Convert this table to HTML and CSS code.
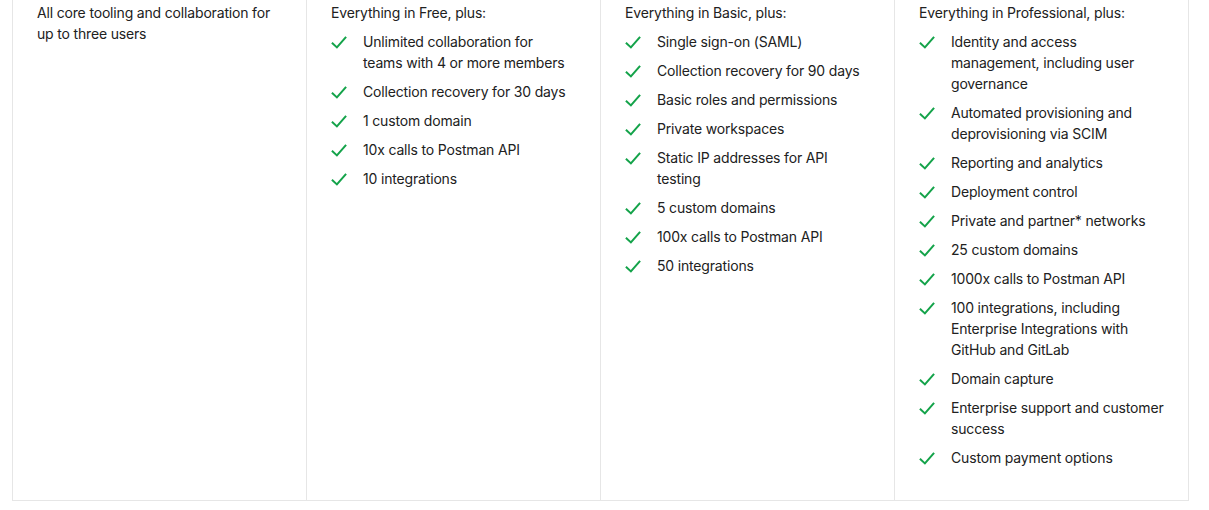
FILE: index.html
```
<!DOCTYPE html>
<html lang="en">
<head>
<meta charset="utf-8">
<title>Plans</title>
<link rel="stylesheet" href="styles.css">
</head>
<body>
<div class="plans">
  <div class="plan">
    <p class="lead">All core tooling and collaboration for up to three users</p>
  </div>
  <div class="plan">
    <p class="lead">Everything in Free, plus:</p>
    <ul class="features">
      <li><svg class="check" viewBox="0 0 16 16"><path d="M0.9 9.8 L5.9 14.4 L15.1 3.8"/></svg><span>Unlimited collaboration for teams&nbsp;with 4 or more members</span></li>
      <li><svg class="check" viewBox="0 0 16 16"><path d="M0.9 9.8 L5.9 14.4 L15.1 3.8"/></svg><span>Collection recovery for 30 days</span></li>
      <li><svg class="check" viewBox="0 0 16 16"><path d="M0.9 9.8 L5.9 14.4 L15.1 3.8"/></svg><span>1 custom domain</span></li>
      <li><svg class="check" viewBox="0 0 16 16"><path d="M0.9 9.8 L5.9 14.4 L15.1 3.8"/></svg><span>10x calls to Postman API</span></li>
      <li><svg class="check" viewBox="0 0 16 16"><path d="M0.9 9.8 L5.9 14.4 L15.1 3.8"/></svg><span>10 integrations</span></li>
    </ul>
  </div>
  <div class="plan">
    <p class="lead">Everything in Basic, plus:</p>
    <ul class="features">
      <li><svg class="check" viewBox="0 0 16 16"><path d="M0.9 9.8 L5.9 14.4 L15.1 3.8"/></svg><span>Single sign-on (SAML)</span></li>
      <li><svg class="check" viewBox="0 0 16 16"><path d="M0.9 9.8 L5.9 14.4 L15.1 3.8"/></svg><span>Collection recovery for 90 days</span></li>
      <li><svg class="check" viewBox="0 0 16 16"><path d="M0.9 9.8 L5.9 14.4 L15.1 3.8"/></svg><span>Basic roles and permissions</span></li>
      <li><svg class="check" viewBox="0 0 16 16"><path d="M0.9 9.8 L5.9 14.4 L15.1 3.8"/></svg><span>Private workspaces</span></li>
      <li><svg class="check" viewBox="0 0 16 16"><path d="M0.9 9.8 L5.9 14.4 L15.1 3.8"/></svg><span>Static IP addresses for API testing</span></li>
      <li><svg class="check" viewBox="0 0 16 16"><path d="M0.9 9.8 L5.9 14.4 L15.1 3.8"/></svg><span>5 custom domains</span></li>
      <li><svg class="check" viewBox="0 0 16 16"><path d="M0.9 9.8 L5.9 14.4 L15.1 3.8"/></svg><span>100x calls to Postman API</span></li>
      <li><svg class="check" viewBox="0 0 16 16"><path d="M0.9 9.8 L5.9 14.4 L15.1 3.8"/></svg><span>50 integrations</span></li>
    </ul>
  </div>
  <div class="plan">
    <p class="lead">Everything in Professional, plus:</p>
    <ul class="features">
      <li><svg class="check" viewBox="0 0 16 16"><path d="M0.9 9.8 L5.9 14.4 L15.1 3.8"/></svg><span>Identity and access management, including user governance</span></li>
      <li><svg class="check" viewBox="0 0 16 16"><path d="M0.9 9.8 L5.9 14.4 L15.1 3.8"/></svg><span>Automated provisioning and deprovisioning via SCIM</span></li>
      <li><svg class="check" viewBox="0 0 16 16"><path d="M0.9 9.8 L5.9 14.4 L15.1 3.8"/></svg><span>Reporting and analytics</span></li>
      <li><svg class="check" viewBox="0 0 16 16"><path d="M0.9 9.8 L5.9 14.4 L15.1 3.8"/></svg><span>Deployment control</span></li>
      <li><svg class="check" viewBox="0 0 16 16"><path d="M0.9 9.8 L5.9 14.4 L15.1 3.8"/></svg><span>Private and partner* networks</span></li>
      <li><svg class="check" viewBox="0 0 16 16"><path d="M0.9 9.8 L5.9 14.4 L15.1 3.8"/></svg><span>25 custom domains</span></li>
      <li><svg class="check" viewBox="0 0 16 16"><path d="M0.9 9.8 L5.9 14.4 L15.1 3.8"/></svg><span>1000x calls to Postman API</span></li>
      <li><svg class="check" viewBox="0 0 16 16"><path d="M0.9 9.8 L5.9 14.4 L15.1 3.8"/></svg><span>100 integrations, including Enterprise Integrations with GitHub and GitLab</span></li>
      <li><svg class="check" viewBox="0 0 16 16"><path d="M0.9 9.8 L5.9 14.4 L15.1 3.8"/></svg><span>Domain capture</span></li>
      <li><svg class="check" viewBox="0 0 16 16"><path d="M0.9 9.8 L5.9 14.4 L15.1 3.8"/></svg><span>Enterprise support and customer success</span></li>
      <li><svg class="check" viewBox="0 0 16 16"><path d="M0.9 9.8 L5.9 14.4 L15.1 3.8"/></svg><span>Custom payment options</span></li>
    </ul>
  </div>
</div>
</body>
</html>
```

FILE: styles.css
```
html, body {
  margin: 0;
  padding: 0;
  background: #ffffff;
}

body {
  font-family: Inter, "Noto Sans", "Liberation Sans", sans-serif;
  font-size: 14px;
  line-height: 21px;
  letter-spacing: -0.17px;
  color: #212121;
}

.plans {
  display: grid;
  grid-template-columns: repeat(4, 294px);
  width: 1177px;
  margin-left: 12px;
  border-right: 1px solid #e6e6e6;
  border-bottom: 1px solid #e6e6e6;
  box-sizing: border-box;
}

.plan {
  border-left: 1px solid #e6e6e6;
  padding: 2px 24px 32px 24px;
  display: flex;
  flex-direction: column;
  gap: 8px;
}

.lead {
  margin: 0;
}

.features {
  list-style: none;
  margin: 0;
  padding: 0;
  display: flex;
  flex-direction: column;
  gap: 8px;
}

.features li {
  display: flex;
  gap: 16px;
  align-items: flex-start;
}

.check {
  flex: 0 0 16px;
  width: 16px;
  height: 16px;
  margin-top: 2px;
  fill: none;
  stroke: #14a34a;
  stroke-width: 2;
  stroke-linecap: butt;
  stroke-linejoin: miter;
}
```
